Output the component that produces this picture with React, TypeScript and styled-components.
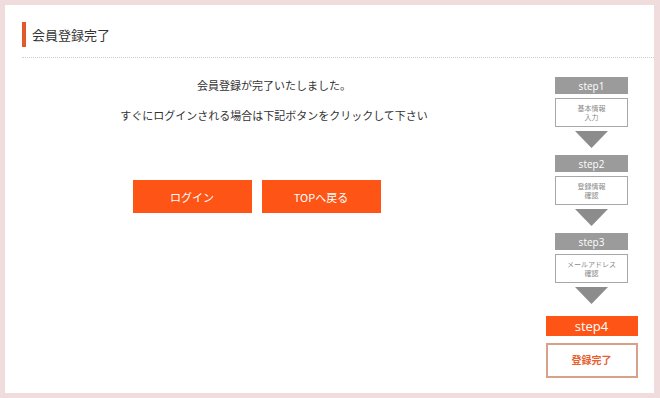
import React from 'react';
import styled, { createGlobalStyle } from 'styled-components';

const GlobalStyle = createGlobalStyle`
  html, body {
    margin: 0;
    padding: 0;
    background: #f0dcdc;
  }

  body {
    font-family: "Noto Sans CJK JP", "Noto Sans", sans-serif;
    color: #333;
  }
`;

const StyledPanel = styled.div`
  margin: 5px 6px 5px 5px;
  width: 649px;
  height: 388px;
  box-sizing: border-box;
  padding-top: 17px;
  padding-left: 17px;
  background: #fff;

  display: flex;
  flex-direction: column;
`;

const StyledHeader = styled.div`
  height: 36px;
  box-sizing: border-box;
  padding-bottom: 11px;
  border-bottom: 1px dotted #cfcfcf;

  display: flex;
  align-items: center;
`;

const StyledHeaderBar = styled.span`
  width: 4px;
  height: 25px;
  margin-right: 6px;
  background: #e05a2a;
`;

const StyledHeaderTitle = styled.h1`
  margin: 0;
  font-size: 13px;
  font-weight: 400;
  color: #333;
`;

const StyledBody = styled.div`
  display: flex;
  flex: 1;
`;

const StyledMain = styled.div`
  width: 504px;
  flex-shrink: 0;
  padding-top: 18px;

  display: flex;
  flex-direction: column;
  align-items: center;
`;

const StyledMessage = styled.p<{ $gap?: number }>`
  margin: ${({ $gap }) => $gap ?? 0}px 0 0;
  font-size: 11px;
  line-height: 18px;
  color: #333;
`;

const StyledButtonRow = styled.div`
  margin-top: 56px;
  padding-right: 35px;

  display: flex;
  gap: 10px;
`;

const StyledButton = styled.button`
  width: 119px;
  height: 33px;
  border: none;
  padding: 0;
  background: #fe5516;
  color: #fff;
  font-family: inherit;
  font-size: 11px;
  cursor: pointer;
`;

const StyledSteps = styled.div`
  width: 128px;
  flex-shrink: 0;
  box-sizing: border-box;
  padding-left: 3px;
  padding-top: 19px;

  display: flex;
  flex-direction: column;
  align-items: center;
`;

const StyledStepLabel = styled.div<{ $active?: boolean; $gap: number }>`
  width: ${({ $active }) => ($active ? 92 : 73)}px;
  height: ${({ $active }) => ($active ? 20 : 17)}px;
  margin-top: ${({ $gap }) => $gap}px;
  background: ${({ $active }) => ($active ? '#fe5516' : '#9b9b9b')};
  color: #fff;
  font-family: "Open Sans", "Noto Sans", sans-serif;
  font-size: ${({ $active }) => ($active ? 13 : 10)}px;
  display: flex;
  align-items: center;
  justify-content: center;
`;

const StyledStepBox = styled.div<{ $active?: boolean }>`
  width: ${({ $active }) => ($active ? 92 : 73)}px;
  height: ${({ $active }) => ($active ? 35 : 29)}px;
  margin-top: ${({ $active }) => ($active ? 7 : 4)}px;
  box-sizing: border-box;
  border: ${({ $active }) => ($active ? '2px solid #d9a189' : '1px solid #a8a8a8')};
  color: ${({ $active }) => ($active ? '#e8602e' : '#8a8a8a')};
  font-size: ${({ $active }) => ($active ? 10 : 7)}px;
  font-weight: ${({ $active }) => ($active ? 700 : 400)};
  line-height: 1.25;
  text-align: center;
  white-space: pre-line;

  display: flex;
  align-items: center;
  justify-content: center;
`;

const StyledArrow = styled.svg`
  display: block;
  margin-top: 4px;
`;

const steps = [
  { label: 'step1', text: '基本情報\n入力' },
  { label: 'step2', text: '登録情報\n確認' },
  { label: 'step3', text: 'メールアドレス\n確認' },
];

const App: React.FC = () => {
  return (
    <>
      <GlobalStyle />
      <StyledPanel>
        <StyledHeader>
          <StyledHeaderBar />
          <StyledHeaderTitle>会員登録完了</StyledHeaderTitle>
        </StyledHeader>
        <StyledBody>
          <StyledMain>
            <StyledMessage>会員登録が完了いたしました。</StyledMessage>
            <StyledMessage $gap={12}>すぐにログインされる場合は下記ボタンをクリックして下さい</StyledMessage>
            <StyledButtonRow>
              <StyledButton>ログイン</StyledButton>
              <StyledButton>TOPへ戻る</StyledButton>
            </StyledButtonRow>
          </StyledMain>
          <StyledSteps>
            {steps.map((step, i) => (
              <React.Fragment key={step.label}>
                <StyledStepLabel $gap={i === 0 ? 0 : 7}>{step.label}</StyledStepLabel>
                <StyledStepBox>{step.text}</StyledStepBox>
                <StyledArrow width="33" height="17" viewBox="0 0 33 17">
                  <polygon points="0,0 33,0 16.5,17" fill="#8c8c8c" />
                </StyledArrow>
              </React.Fragment>
            ))}
            <StyledStepLabel $active $gap={12}>step4</StyledStepLabel>
            <StyledStepBox $active>登録完了</StyledStepBox>
          </StyledSteps>
        </StyledBody>
      </StyledPanel>
    </>
  );
};

export default App;
